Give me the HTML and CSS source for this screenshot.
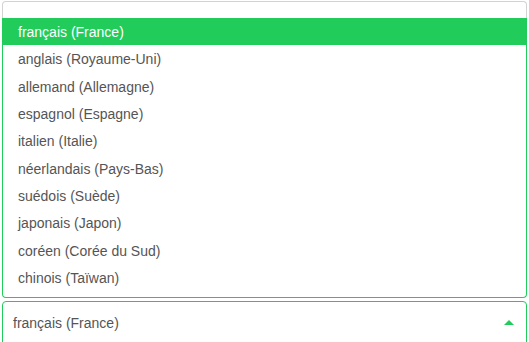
FILE: index.html
```html
<!DOCTYPE html>
<html lang="fr">
<head>
<meta charset="utf-8">
<title>Langue</title>
<link rel="stylesheet" href="styles.css">
</head>
<body>
<div class="picker">
  <div class="menu">
    <div class="menu-top"></div>
    <ul class="options">
      <li class="option active">français (France)</li>
      <li class="option">anglais (Royaume-Uni)</li>
      <li class="option">allemand (Allemagne)</li>
      <li class="option">espagnol (Espagne)</li>
      <li class="option">italien (Italie)</li>
      <li class="option">néerlandais (Pays-Bas)</li>
      <li class="option">suédois (Suède)</li>
      <li class="option">japonais (Japon)</li>
      <li class="option">coréen (Corée du Sud)</li>
      <li class="option">chinois (Taïwan)</li>
    </ul>
  </div>
  <div class="select">
    <span class="select-value">français (France)</span>
    <span class="caret"></span>
  </div>
</div>
</body>
</html>
```
FILE: styles.css
```css
html, body {
  margin: 0;
  padding: 0;
  background: #fff;
}
body {
  font-family: "Liberation Sans", Arial, sans-serif;
  font-size: 14px;
  color: #555;
}
.picker {
  width: 525px;
  margin: 1px 0 0 2px;
  display: flex;
  flex-direction: column;
  gap: 3px;
}
.menu {
  display: flex;
  flex-direction: column;
}
.menu-top {
  height: 16px;
  border: 1px solid #d3d3d3;
  border-bottom: none;
  border-radius: 4px 4px 0 0;
}
.options {
  list-style: none;
  margin: 0;
  padding: 0 0 6px;
  border: 1px solid #22cc5b;
  border-top: none;
  border-radius: 0 0 4px 4px;
}
.option {
  height: 27.33px;
  line-height: 25.33px;
  padding: 2px 0 0 15px;
  box-sizing: border-box;
}
.option.active {
  background: #22cc5b;
  color: #fff;
  margin: 0 -1px;
  padding-left: 16px;
}
.select {
  height: 48px;
  border: 1px solid #22cc5b;
  border-radius: 4px;
  display: flex;
  align-items: flex-start;
  justify-content: space-between;
  padding: 13px 12px 0 10px;
  box-sizing: border-box;
}
.select-value {
  line-height: 17px;
}
.caret {
  width: 0;
  height: 0;
  border-left: 5px solid transparent;
  border-right: 5px solid transparent;
  border-bottom: 5px solid #22cc5b;
  margin-top: 5px;
}
```
